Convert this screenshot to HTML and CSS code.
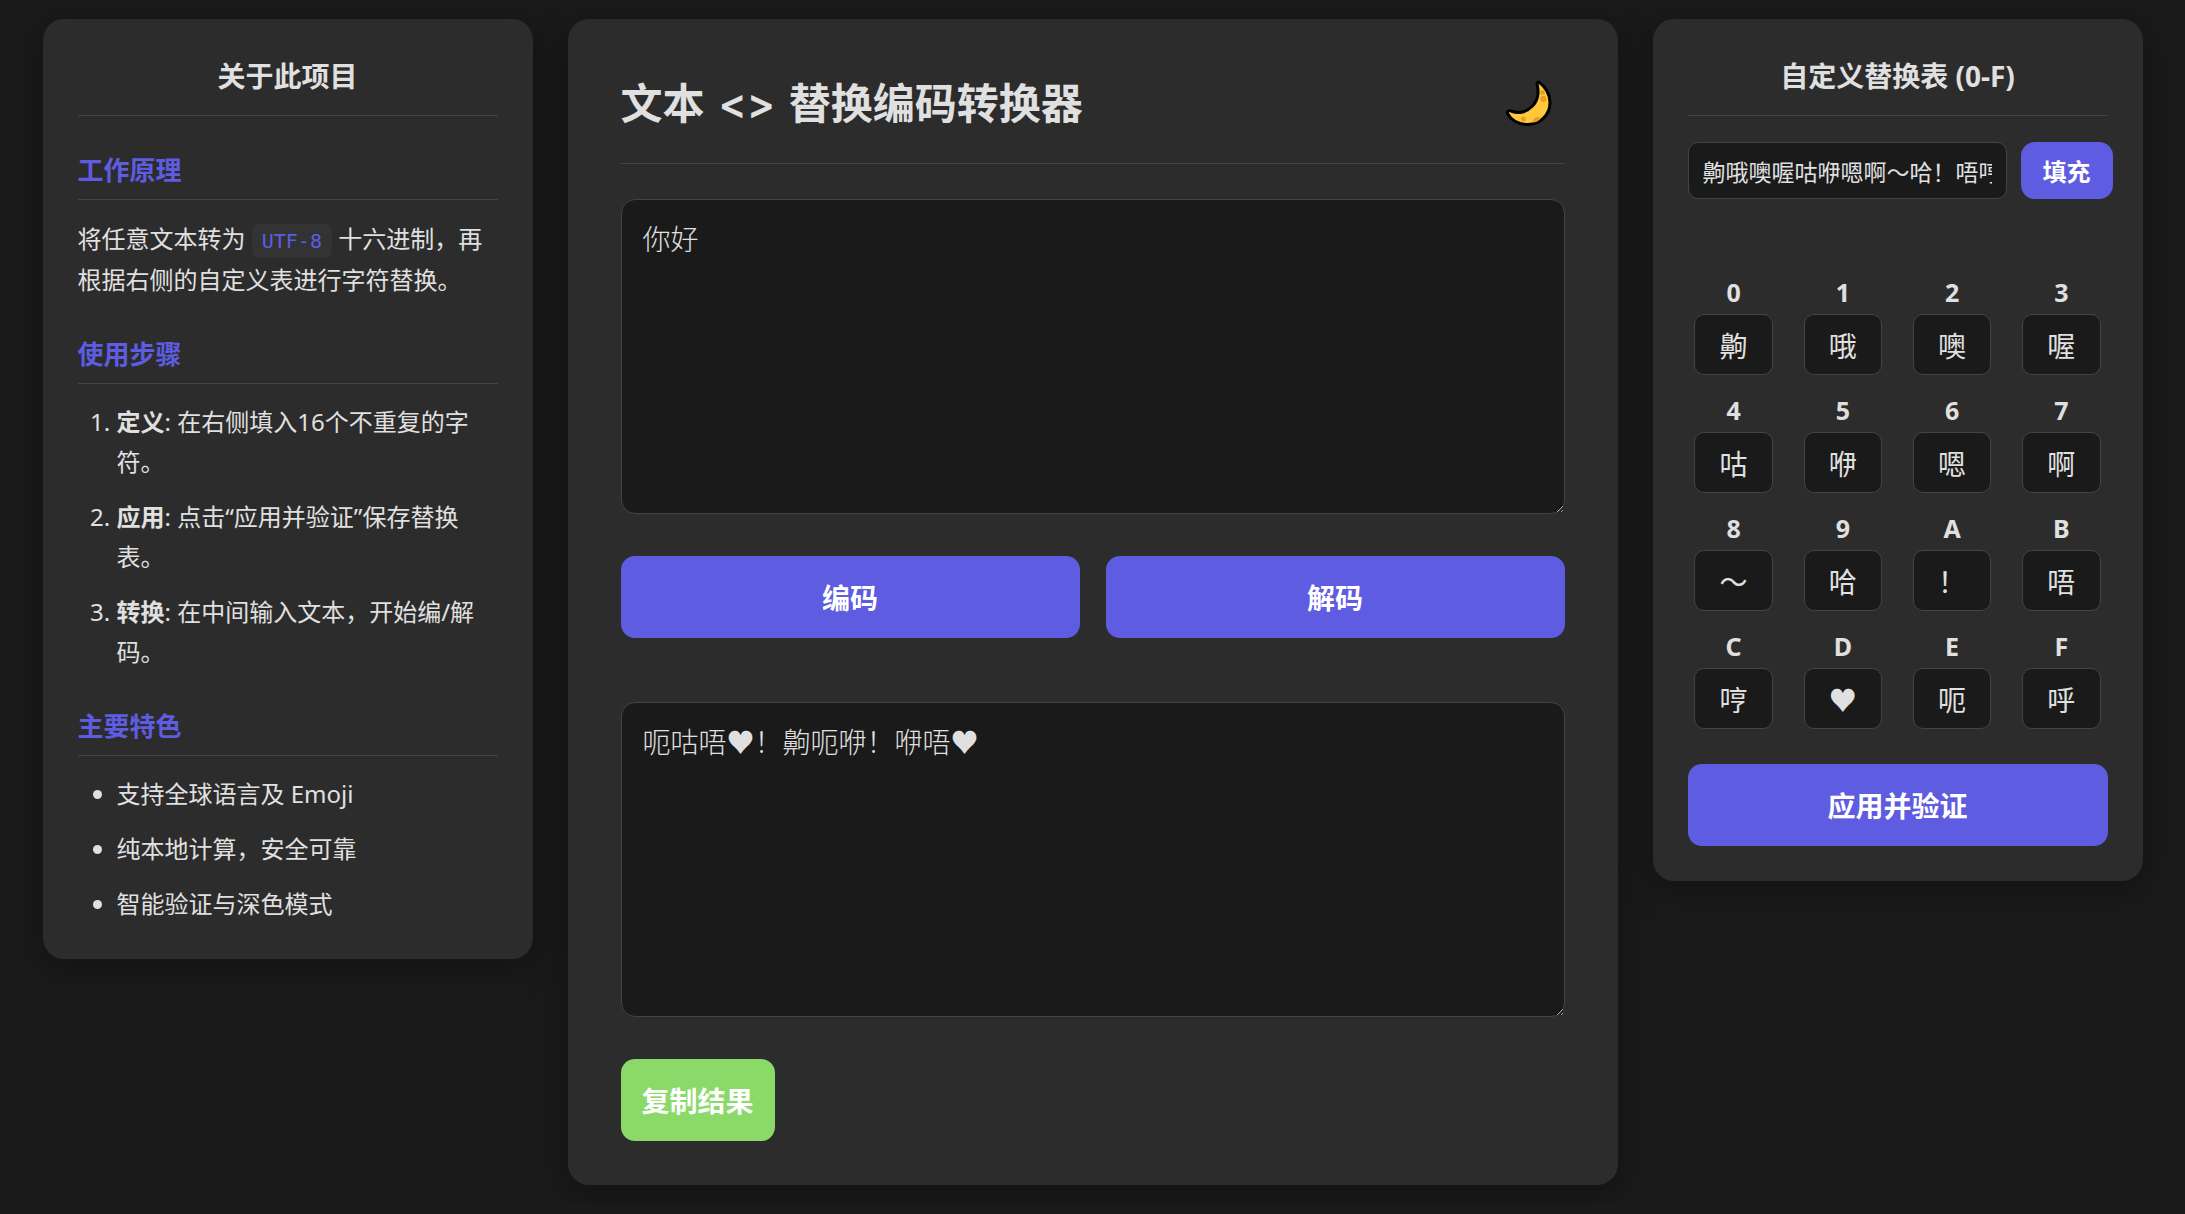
FILE: index.html
```html
<!DOCTYPE html>
<html lang="zh-CN">
<head>
    <meta charset="UTF-8">
    <meta name="viewport" content="width=device-width, initial-scale=1.0">
    <title>文本 &lt;&gt; 替换编码转换器</title>
    <link rel="stylesheet" href="styles.css">
</head>
<body>

    <div class="layout">

        <!-- 左侧说明 -->
        <aside class="panel side-panel">
            <h2>关于此项目</h2>

            <h3>工作原理</h3>
            <p>将任意文本转为 <code>UTF-8</code> 十六进制，再根据右侧的自定义表进行字符替换。</p>

            <h3>使用步骤</h3>
            <ol>
                <li><strong>定义</strong>: 在右侧填入16个不重复的字符。</li>
                <li><strong>应用</strong>: 点击“应用并验证”保存替换表。</li>
                <li><strong>转换</strong>: 在中间输入文本，开始编/解码。</li>
            </ol>

            <h3>主要特色</h3>
            <ul>
                <li>支持全球语言及 Emoji</li>
                <li>纯本地计算，安全可靠</li>
                <li>智能验证与深色模式</li>
            </ul>
        </aside>

        <!-- 转换器 -->
        <main class="panel main-panel">
            <header>
                <h1>文本 <span class="arrows">&lt;&gt;</span> 替换编码转换器</h1>
                <button type="button" class="theme-btn" aria-label="切换主题">
                    <svg viewBox="0 0 48 48" width="48" height="48">
                        <path d="M34.5 2.5C40 6.500 45 14 45 22.500C45 35 35 44.500 23 44.500C13.500 44.500 6 40 2.500 33.500C2 31.500 4 30 6 31C14 34 21.500 32 27.500 26C33 20.500 34 13 32.300 5C31.500 2.500 33 1.500 34.500 2.500Z" fill="#ffc83d" stroke="#000" stroke-width="3" stroke-linejoin="round"/>
                        <circle cx="37.500" cy="12.500" r="2.300" fill="#e8a01c"/>
                        <circle cx="38.300" cy="19" r="3" fill="#e8a01c"/>
                        <circle cx="18.500" cy="39" r="2.400" fill="#e8a01c"/>
                        <path d="M28 42.600C27.500 39 30.500 36.800 33.500 37C34.800 37.200 35.500 38 35.500 39C33.500 41 31 42.200 28 42.600Z" fill="#e8a01c"/>
                    </svg>
                </button>
            </header>

            <textarea id="inputText" aria-label="输入文本">你好</textarea>

            <div class="actions">
                <button type="button" class="btn">编码</button>
                <button type="button" class="btn">解码</button>
            </div>

            <textarea id="outputText" aria-label="输出结果" readonly>呃咕唔♥！齁呃咿！咿唔♥</textarea>

            <button type="button" class="btn copy-btn">复制结果</button>
        </main>

        <!-- 替换表 -->
        <aside class="panel side-panel">
            <h2>自定义替换表 (0-F)</h2>

            <div class="fill-row">
                <input type="text" id="fillInput" aria-label="快速填充" value="齁哦噢喔咕咿嗯啊～哈！唔哼♥呃呼">
                <button type="button" class="fill-btn">填充</button>
            </div>

            <div class="map-grid">
                <div class="map-item"><label for="map0">0</label><input type="text" id="map0" value="齁"></div>
                <div class="map-item"><label for="map1">1</label><input type="text" id="map1" value="哦"></div>
                <div class="map-item"><label for="map2">2</label><input type="text" id="map2" value="噢"></div>
                <div class="map-item"><label for="map3">3</label><input type="text" id="map3" value="喔"></div>
                <div class="map-item"><label for="map4">4</label><input type="text" id="map4" value="咕"></div>
                <div class="map-item"><label for="map5">5</label><input type="text" id="map5" value="咿"></div>
                <div class="map-item"><label for="map6">6</label><input type="text" id="map6" value="嗯"></div>
                <div class="map-item"><label for="map7">7</label><input type="text" id="map7" value="啊"></div>
                <div class="map-item"><label for="map8">8</label><input type="text" id="map8" value="～"></div>
                <div class="map-item"><label for="map9">9</label><input type="text" id="map9" value="哈"></div>
                <div class="map-item"><label for="mapA">A</label><input type="text" id="mapA" value="！"></div>
                <div class="map-item"><label for="mapB">B</label><input type="text" id="mapB" value="唔"></div>
                <div class="map-item"><label for="mapC">C</label><input type="text" id="mapC" value="哼"></div>
                <div class="map-item"><label for="mapD">D</label><input type="text" id="mapD" value="♥"></div>
                <div class="map-item"><label for="mapE">E</label><input type="text" id="mapE" value="呃"></div>
                <div class="map-item"><label for="mapF">F</label><input type="text" id="mapF" value="呼"></div>
            </div>

            <button type="button" class="btn apply-btn">应用并验证</button>
        </aside>

    </div>

</body>
</html>
```
FILE: styles.css
```css
:root {
    color-scheme: dark;
    --bg: #1a1a1a;
    --panel: #2c2c2c;
    --text: #e0e0e0;
    --border: #444;
    --accent: #5e5ce0;
    --green: #8bd968;
}

* {
    box-sizing: border-box;
}

body {
    margin: 0;
    padding: 19px 35px;
    background-color: var(--bg);
    color: var(--text);
    font-family: "Noto Sans", "Noto Sans CJK SC", "DejaVu Sans", sans-serif;
    font-size: 24px;
}

.layout {
    display: grid;
    grid-template-columns: 7fr 15fr 7fr;
    gap: 35px;
    align-items: start;
    max-width: 2100px;
    margin: 0 auto;
}

.panel {
    min-width: 0;
    background-color: var(--panel);
    border-radius: 21px;
    box-shadow: 0 7px 35px rgba(0, 0, 0, 0.3);
}

.side-panel {
    padding: 35px;
}

.main-panel {
    padding: 53px 53px 44px;
}

h1, h2, h3, p, ol, ul {
    margin: 0;
}

h2 {
    padding-bottom: 16px;
    border-bottom: 1px solid var(--border);
    font-size: 28px;
    line-height: 45px;
    text-align: center;
}

h3 {
    margin: 33px 0 18px;
    padding-bottom: 8px;
    border-bottom: 1px solid var(--border);
    color: var(--accent);
    font-size: 26px;
    line-height: 42px;
}

p {
    line-height: 41px;
}

code {
    padding: 5px 10px;
    border-radius: 7px;
    background-color: #333;
    color: var(--accent);
    font-family: Consolas, "DejaVu Sans Mono", monospace;
    font-size: 20px;
    line-height: 20px;
}

ol, ul {
    padding-left: 39px;
}

li {
    margin-bottom: 15px;
    line-height: 40px;
}

ul li:last-child {
    margin-bottom: 0;
}

header {
    display: flex;
    justify-content: space-between;
    align-items: center;
    margin-bottom: 35px;
    padding-bottom: 28px;
    border-bottom: 1px solid var(--border);
}

h1 {
    font-size: 42px;
    line-height: 62px;
}

.arrows {
    padding: 0 3px;
    font-family: Inter, sans-serif;
    font-weight: 600;
}

button {
    border: none;
    cursor: pointer;
    font-family: inherit;
}

.theme-btn {
    display: flex;
    padding: 0 12px;
    background: none;
}

input, textarea {
    border: 1px solid var(--border);
    background-color: var(--bg);
    color: var(--text);
    font-family: inherit;
}

textarea {
    display: block;
    width: 100%;
    height: 315px;
    padding: 21px;
    border-radius: 14px;
    font-size: 28px;
    font-weight: 300;
    line-height: 36px;
    resize: vertical;
}

.btn {
    height: 82px;
    padding: 0 21px;
    border-radius: 14px;
    background-color: var(--accent);
    color: white;
    font-size: 28px;
    font-weight: bold;
}

.actions {
    display: grid;
    grid-template-columns: 1fr 1fr;
    gap: 26px;
    margin: 42px 0 64px;
}

.copy-btn {
    display: block;
    margin-top: 42px;
    background-color: var(--green);
}

.fill-row {
    display: flex;
    gap: 14px;
    margin: 26px -5px 75px 0;
}

.fill-row input {
    flex: 1;
    min-width: 0;
    height: 57px;
    padding: 0 14px;
    border-radius: 10px;
    font-size: 23px;
}

.fill-btn {
    padding: 0 22px;
    border-radius: 14px;
    background-color: var(--accent);
    color: white;
    font-size: 24px;
    font-weight: bold;
}

.map-grid {
    display: grid;
    grid-template-columns: repeat(4, 1fr);
    gap: 17px;
}

.map-item {
    display: flex;
    flex-direction: column;
    align-items: center;
}

.map-item label {
    padding-bottom: 3px;
    font-size: 25px;
    font-weight: bold;
    line-height: 37px;
}

.map-item input {
    width: 85%;
    height: 61px;
    padding: 0;
    border-radius: 10px;
    font-size: 28px;
    text-align: center;
}

.apply-btn {
    width: 100%;
    margin-top: 35px;
}
```
